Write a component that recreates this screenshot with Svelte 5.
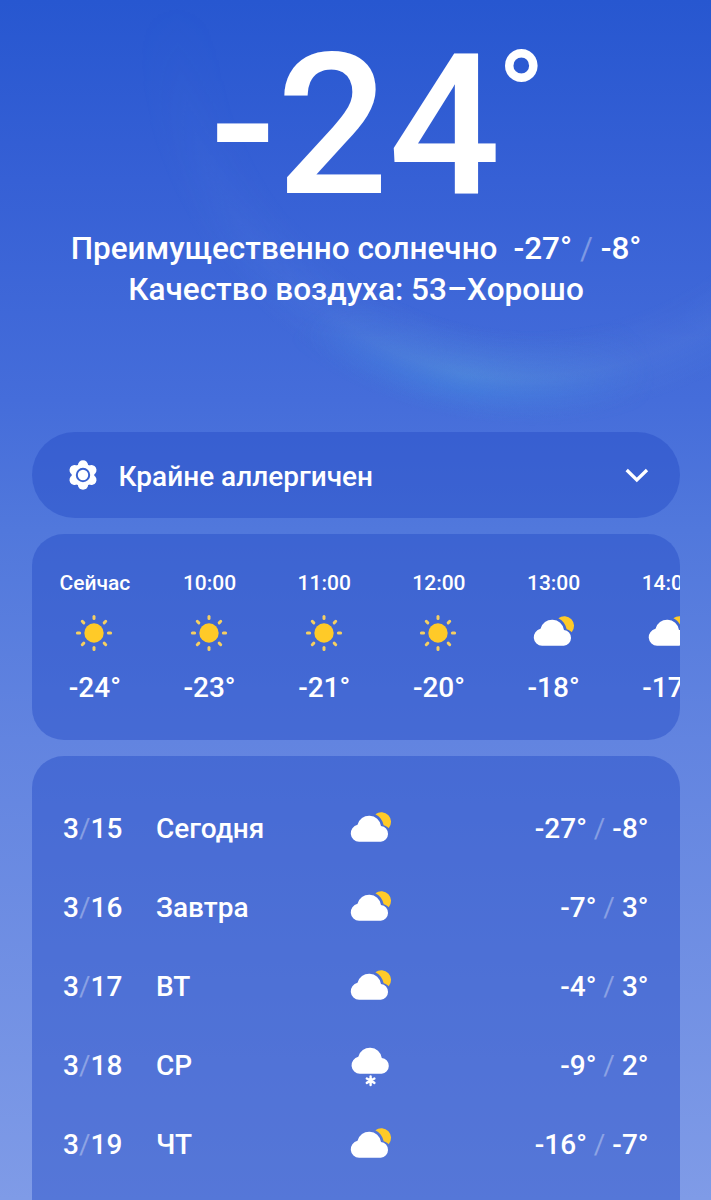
<script>
  const hours = [
    { time: 'Сейчас', icon: 'sun', temp: '-24°' },
    { time: '10:00', icon: 'sun', temp: '-23°' },
    { time: '11:00', icon: 'sun', temp: '-21°' },
    { time: '12:00', icon: 'sun', temp: '-20°' },
    { time: '13:00', icon: 'partly', temp: '-18°' },
    { time: '14:00', icon: 'partly', temp: '-17°' }
  ];
  const days = [
    { date: 15, name: 'Сегодня', icon: 'partly', low: '-27°', high: '-8°' },
    { date: 16, name: 'Завтра', icon: 'partly', low: '-7°', high: '3°' },
    { date: 17, name: 'ВТ', icon: 'partly', low: '-4°', high: '3°' },
    { date: 18, name: 'СР', icon: 'snow', low: '-9°', high: '2°' },
    { date: 19, name: 'ЧТ', icon: 'partly', low: '-16°', high: '-7°' }
  ];
  const rays = [0, 45, 90, 135, 180, 225, 270, 315];
  const petals = [0, 60, 120, 180, 240, 300];
  const cloud = 'M10.1 33.8a8.6 8.6 0 0 1-1.6-17A12 12 0 0 1 32 17.9A8 8 0 0 1 31.8 33.8Z';
</script>

{#snippet weather(kind)}
  <svg class="weather" width="42" height="42" viewBox="0 0 42 42">
    {#if kind === 'sun'}
      <circle cx="21" cy="21" r="9.7" fill="#ffca28" />
      {#each rays as angle}
        <path d="M21 4.4v2.2" stroke="#f5cf62" stroke-width="3" stroke-linecap="round" transform="rotate({angle} 21 21)" />
      {/each}
    {:else if kind === 'partly'}
      <path d="M26.400 6.200A9.700 9.700 0 0 1 39.700 20.200C38.400 18.800 36.700 17.800 34.700 17.200C33.500 12.200 31 8.400 26.400 6.200Z" fill="#ffca28" />
      <path d={cloud} fill="#fff" />
    {:else}
      <path d={cloud} fill="#fff" transform="translate(.8 -5)" />
      <path d="M21.600 31.400v8.600M17.800 33.500l7.600 4.400M17.800 37.900l7.600-4.400" stroke="#fff" stroke-width="2.400" stroke-linecap="round" />
    {/if}
  </svg>
{/snippet}

<main class="screen">
  <div class="halo"></div>
  <div class="glow"></div>
  <header class="current">
    <h1 class="now">-24<span class="degree">°</span></h1>
    <p class="summary"><span class="condition">Преимущественно солнечно</span>-27° <i>/</i> -8°</p>
    <p class="summary">Качество воздуха: 53–Хорошо</p>
  </header>

  <button class="card allergy">
    <svg width="32" height="32" viewBox="0 0 32 32">
      {#each petals as angle}
        <circle cx="16" cy="6.300" r="5.100" fill="#fff" transform="rotate({angle} 16 16)" />
      {/each}
      <circle cx="16" cy="16" r="11.300" fill="#fff" />
      <circle cx="16" cy="16" r="6.200" fill="none" stroke="#3962d1" stroke-width="2" />
    </svg>
    <span class="label">Крайне аллергичен</span>
    <svg width="24" height="16" viewBox="0 0 24 16">
      <path d="M1.700 3 11.800 12.900 22 3" fill="none" stroke="#fff" stroke-width="3.300" />
    </svg>
  </button>

  <section class="card hourly">
    {#each hours as hour}
      <div class="hour">
        <span class="time">{hour.time}</span>
        {@render weather(hour.icon)}
        <span class="temp">{hour.temp}</span>
      </div>
    {/each}
  </section>

  <section class="card daily">
    {#each days as day}
      <div class="day">
        <span>3<i>/</i>{day.date}</span>
        <span>{day.name}</span>
        {@render weather(day.icon)}
        <span class="range">{day.low} <i>/</i> {day.high}</span>
      </div>
    {/each}
  </section>
</main>

<style>
  :global(body) {
    margin: 0;
    overflow: hidden;
  }

  .screen {
    position: relative;
    display: flex;
    flex-direction: column;
    gap: 16px;
    box-sizing: border-box;
    height: 1200px;
    padding: 0 31.500px;
    overflow: hidden;
    background: linear-gradient(#2757d0 0, #3660d5 180px, #456dda 400px, #5178dc 530px, #6284e0 740px, #7f9be7 1200px);
    color: #fff;
    font: 500 28px/34px Roboto, sans-serif;
  }

  /* Faint lens-flare ring behind the current conditions */
  .halo,
  .glow {
    position: absolute;
    inset: 0 0 auto;
    height: 430px;
  }

  .halo {
    background: radial-gradient(circle at 532px 20px, transparent 310px, rgba(125, 165, 235, 0.1) 355px, rgba(110, 165, 235, 0.07) 370px, transparent 398px);
    mask-image: linear-gradient(transparent, rgba(0, 0, 0, 0.4) 45%, #000 80%);
  }

  .glow {
    background: radial-gradient(circle at 532px 20px, transparent 310px, rgba(85, 160, 220, 0.4) 360px, rgba(65, 145, 225, 0.36) 376px, transparent 406px);
    mask-image: radial-gradient(ellipse 190px 110px at 465px 378px, #000, transparent);
  }

  .current {
    position: relative;
    flex: none;
    height: 416px;
    text-align: center;
  }

  .now {
    display: flex;
    justify-content: center;
    height: 201.500px;
    margin: 0;
    padding: 26px 0 0 44px;
    font-size: 197px;
    font-weight: 500;
    line-height: 200px;
  }

  .degree {
    margin-left: -3.500px;
    font-size: 127px;
    line-height: 142px;
  }

  .summary {
    margin: 0;
    padding-left: 1px;
    font-size: 31.500px;
    line-height: 41.500px;
    white-space: pre;
  }

  .condition {
    margin-right: 16px;
  }

  i {
    color: rgba(255, 255, 255, 0.34);
    font-style: normal;
    font-weight: 400;
  }

  .card {
    position: relative;
    flex: none;
    box-sizing: border-box;
    border-radius: 32px;
    background: rgba(36, 77, 198, 0.46);
  }

  .allergy {
    display: flex;
    align-items: center;
    height: 86px;
    padding: 0 31px 0 35px;
    border: 0;
    border-radius: 43px;
    color: inherit;
    font: inherit;
    text-align: left;
  }

  .label {
    flex: 1;
    padding: 3px 0 0 20px;
  }

  .hourly {
    display: flex;
    height: 206px;
    padding: 31.500px 0 0 6px;
    overflow: hidden;
  }

  .hour {
    display: flex;
    flex: none;
    flex-direction: column;
    align-items: center;
    width: 114.700px;
  }

  .time {
    font-size: 21px;
  }

  .weather {
    flex: none;
    overflow: visible;
  }

  .hour .weather {
    margin: 12.500px 1px 16.500px 0;
  }

  .daily {
    height: 500px;
    padding: 33px 31px 0 31.500px;
  }

  .day {
    display: grid;
    grid-template-columns: 93px 192.500px 42px 1fr;
    align-items: center;
    height: 79px;
  }

  .range {
    text-align: right;
  }
</style>
